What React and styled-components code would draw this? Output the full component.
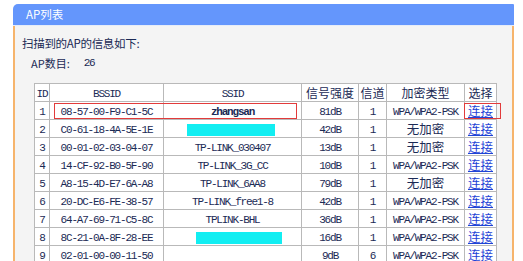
import styled, { createGlobalStyle } from 'styled-components'

const GlobalStyle = createGlobalStyle`
  html, body {
    margin: 0;
    padding: 0;
    background: #ffffff;
    overflow: hidden;
  }
  body {
    font-family: 'Noto Sans CJK SC', 'Liberation Sans', sans-serif;
    color: #1b2a55;
  }
`

const rows = [
  { id: 1, bssid: '08-57-00-F9-C1-5C', ssid: 'zhangsan', bold: true, signal: '81dB', ch: 1, enc: 'WPA/WPA2-PSK' },
  { id: 2, bssid: 'C0-61-18-4A-5E-1E', hidden: { w: 88, shift: -2 }, signal: '42dB', ch: 1, enc: '无加密' },
  { id: 3, bssid: '00-01-02-03-04-07', ssid: 'TP-LINK_030407', signal: '13dB', ch: 1, enc: '无加密' },
  { id: 4, bssid: '14-CF-92-B0-5F-90', ssid: 'TP-LINK_3G_CC', signal: '10dB', ch: 1, enc: 'WPA/WPA2-PSK' },
  { id: 5, bssid: 'A8-15-4D-E7-6A-A8', ssid: 'TP-LINK_6AA8', signal: '79dB', ch: 1, enc: '无加密' },
  { id: 6, bssid: '20-DC-E6-FE-38-57', ssid: 'TP-LINK_free1-8', signal: '42dB', ch: 1, enc: 'WPA/WPA2-PSK' },
  { id: 7, bssid: '64-A7-69-71-C5-8C', ssid: 'TPLINK-BHL', signal: '36dB', ch: 1, enc: 'WPA/WPA2-PSK' },
  { id: 8, bssid: '8C-21-0A-8F-28-EE', hidden: { w: 86, shift: 6 }, signal: '16dB', ch: 1, enc: 'WPA/WPA2-PSK' },
  { id: 9, bssid: '02-01-00-00-11-50', ssid: '', signal: '9dB', ch: 6, enc: 'WPA/WPA2-PSK' },
]

const App = () => {
  return (
    <>
      <GlobalStyle />
      <Page>
        <Panel>
          <TitleBar>AP列表</TitleBar>
          <Body>
            <Intro>扫描到的AP的信息如下:</Intro>
            <Count>
              AP数目: <Mono>26</Mono>
            </Count>
            <TableWrap>
              <Table>
                <colgroup>
                  <col style={{ width: 15 }} />
                  <col style={{ width: 114 }} />
                  <col style={{ width: 138 }} />
                  <col style={{ width: 57 }} />
                  <col style={{ width: 28 }} />
                  <col style={{ width: 78 }} />
                  <col style={{ width: 32 }} />
                </colgroup>
                <thead>
                  <tr>
                    <Th><Mono>ID</Mono></Th>
                    <Th><Mono>BSSID</Mono></Th>
                    <Th><Mono>SSID</Mono></Th>
                    <Th>信号强度</Th>
                    <Th>信道</Th>
                    <Th>加密类型</Th>
                    <Th>选择</Th>
                  </tr>
                </thead>
                <tbody>
                  {rows.map((r) => (
                    <tr key={r.id}>
                      <Td><Mono>{r.id}</Mono></Td>
                      <Td><Mono>{r.bssid}</Mono></Td>
                      <Td>
                        {r.hidden ? (
                          <Redacted $w={r.hidden.w} $shift={r.hidden.shift} />
                        ) : (
                          <Mono $bold={r.bold}>{r.ssid}</Mono>
                        )}
                      </Td>
                      <Td><Mono>{r.signal}</Mono></Td>
                      <Td><Mono>{r.ch}</Mono></Td>
                      <Td>{r.enc === '无加密' ? <Cjk>{r.enc}</Cjk> : <Mono>{r.enc}</Mono>}</Td>
                      <Td><Link href='#'>连接</Link></Td>
                    </tr>
                  ))}
                </tbody>
              </Table>
              <Mark $left={20} $top={20} $w={243} />
              <Mark $left={430} $top={20} $w={37} />
            </TableWrap>
          </Body>
        </Panel>
      </Page>
    </>
  )
}

const Page = styled.div`
  padding: 4px 0 0 13px;
  width: 501px;
  height: 257px;
  overflow: hidden;
`

const Panel = styled.div`
  display: flex;
  flex-direction: column;
`

const TitleBar = styled.div`
  height: 21px;
  padding-left: 13px;
  background: #6496fc;
  border-top-left-radius: 5px;
  border-top-right-radius: 1px;
  border-bottom: 1px solid #e6ecf8;
  color: #ffffff;
  font-size: 11.5px;
  line-height: 21px;
`

const Body = styled.div`
  background: #f4f4f4;
  border-left: 2px solid #f6b46c;
  border-right: 2px solid #f6b46c;
  padding: 10px 0 40px 7px;
  height: 300px;
`

const Intro = styled.div`
  font-size: 11.5px;
  line-height: 14px;
  letter-spacing: -0.3px;
`

const Count = styled.div`
  margin-top: 6px;
  padding-left: 9px;
  font-size: 11px;
  line-height: 14px;
  display: flex;
  gap: 14px;
  align-items: center;
`

const Mono = styled.span`
  font-family: 'Liberation Mono', monospace;
  font-size: 11px;
  line-height: 14px;
  letter-spacing: -1.2px;
  font-weight: ${(p) => (p.$bold ? 700 : 400)};
`

const Cjk = styled.span`
  font-size: 12.5px;
  line-height: 14px;
`

const TableWrap = styled.div`
  position: relative;
  margin: 13px 0 0 12px;
  width: 462px;
`

const Table = styled.table`
  border-collapse: collapse;
  table-layout: fixed;
  width: 462px;
  background: #ffffff;
`

const Th = styled.th`
  height: 18px;
  box-sizing: border-box;
  padding: 0;
  border: 1px solid #b9b9b9;
  font-weight: 400;
  font-size: 12px;
  line-height: 14px;
  text-align: center;
  white-space: nowrap;
  overflow: hidden;
`

const Td = styled.td`
  height: 18px;
  box-sizing: border-box;
  padding: 0;
  border: 1px solid #b9b9b9;
  font-size: 11px;
  line-height: 14px;
  text-align: center;
  white-space: nowrap;
  overflow: hidden;
`

const Link = styled.a`
  color: #1f44d6;
  text-decoration: underline;
  font-size: 12.5px;
  line-height: 14px;
`

const Redacted = styled.span`
  display: inline-block;
  vertical-align: middle;
  width: ${(p) => p.$w}px;
  height: 12px;
  background: #12eef2;
  transform: translateX(${(p) => p.$shift}px);
`

const Mark = styled.div`
  position: absolute;
  left: ${(p) => p.$left}px;
  top: ${(p) => p.$top}px;
  width: ${(p) => p.$w}px;
  height: 16px;
  border: 1px solid #e23b3b;
  box-sizing: border-box;
  pointer-events: none;
`

export default App
